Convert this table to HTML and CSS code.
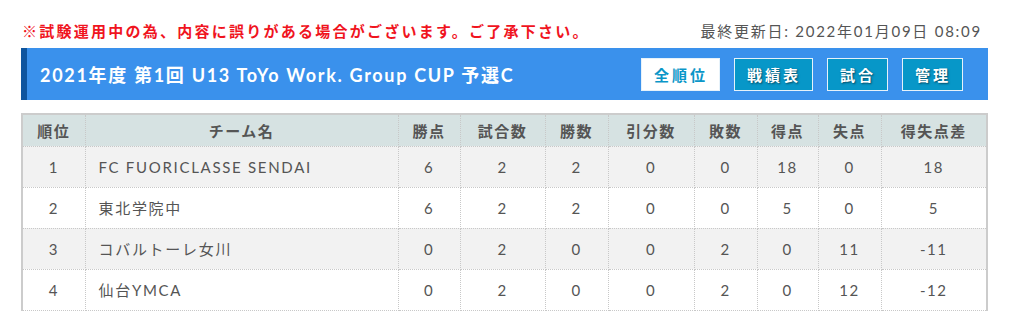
FILE: index.html
```html
<!DOCTYPE html>
<html lang="ja">
<head>
<meta charset="utf-8">
<link rel="stylesheet" href="styles.css">
</head>
<body>
<div class="page">
  <div class="topline">
    <p class="notice">※試験運用中の為、内容に誤りがある場合がございます。ご了承下さい。</p>
    <p class="updated">最終更新日: 2022年01月09日 08:09</p>
  </div>
  <div class="bar">
    <h1 class="title">2021年度 第1回 U13 ToYo Work. Group CUP 予選C</h1>
    <nav class="btns">
      <a class="btn btn-active">全順位</a>
      <a class="btn">戦績表</a>
      <a class="btn">試合</a>
      <a class="btn">管理</a>
    </nav>
  </div>
  <table class="standings">
    <colgroup>
      <col class="c-rank"><col class="c-team"><col class="c-pts"><col class="c-gp"><col class="c-w"><col class="c-d"><col class="c-l"><col class="c-gf"><col class="c-ga"><col class="c-gd">
    </colgroup>
    <thead>
      <tr><th>順位</th><th>チーム名</th><th>勝点</th><th>試合数</th><th>勝数</th><th>引分数</th><th>敗数</th><th>得点</th><th>失点</th><th>得失点差</th></tr>
    </thead>
    <tbody>
      <tr class="odd"><td>1</td><td class="team">FC FUORICLASSE SENDAI</td><td>6</td><td>2</td><td>2</td><td>0</td><td>0</td><td>18</td><td>0</td><td>18</td></tr>
      <tr><td>2</td><td class="team">東北学院中</td><td>6</td><td>2</td><td>2</td><td>0</td><td>0</td><td>5</td><td>0</td><td>5</td></tr>
      <tr class="odd"><td>3</td><td class="team">コバルトーレ女川</td><td>0</td><td>2</td><td>0</td><td>0</td><td>2</td><td>0</td><td>11</td><td>-11</td></tr>
      <tr><td>4</td><td class="team">仙台YMCA</td><td>0</td><td>2</td><td>0</td><td>0</td><td>2</td><td>0</td><td>12</td><td>-12</td></tr>
    </tbody>
  </table>
</div>
</body>
</html>
```
FILE: styles.css
```css
* { box-sizing: border-box; }
html, body { margin: 0; padding: 0; background: #fff; }
body {
  font-family: Lato, "Noto Sans CJK JP", sans-serif;
  color: #555;
  letter-spacing: 0.1em;
}
.page { padding: 18px 21px 0; }
.topline {
  display: flex;
  justify-content: space-between;
  align-items: center;
  height: 24px;
  padding: 0 6px 0 1px;
}
.notice {
  margin: 0;
  color: #f0141e;
  font-weight: bold;
  font-size: 15px;
  letter-spacing: 2.25px;
}
.updated {
  margin: 0;
  color: #555;
  font-size: 15px;
  letter-spacing: 1.75px;
}
.bar {
  margin-top: 6px;
  height: 52px;
  background: #3a91ec;
  border-left: 6px solid #0f559e;
  display: flex;
  align-items: center;
  justify-content: space-between;
  padding: 0 25px 0 13px;
}
.title {
  margin: 0;
  color: #fff;
  font-size: 18px;
  font-weight: bold;
  letter-spacing: 1.7px;
}
.btns { display: flex; gap: 14px; }
.btn {
  display: flex;
  align-items: center;
  height: 33px;
  padding: 0 11px 0 12px;
  border: 1px solid #e6f2fa;
  background: #0797c8;
  color: #fff;
  font-weight: bold;
  font-size: 15px;
  letter-spacing: 3px;
  text-shadow: 1px 1px 2px rgba(0,0,0,0.5);
}
.btn-active {
  background: #fff;
  color: #0a96c8;
  text-shadow: none;
}
.standings {
  margin-top: 13px;
  width: 100%;
  border-collapse: collapse;
  table-layout: fixed;
  border-top: 2px solid #ccc;
  border-left: 2px solid #ccc;
  border-right: 2px solid #ccc;
}
.c-rank { width: 63px; }
.c-team { width: 313px; }
.c-pts { width: 62px; }
.c-gp { width: 85px; }
.c-w { width: 63px; }
.c-d { width: 86px; }
.c-l { width: 63px; }
.c-gf { width: 61px; }
.c-ga { width: 63px; }
.c-gd { width: auto; }
.standings th, .standings td {
  border: 1px dotted #c8c8c8;
  text-align: center;
  padding: 0;
}
.standings th {
  height: 32px;
  background: #d6e2e2;
  color: #555;
  font-size: 15px;
  font-weight: bold;
  letter-spacing: 1.5px;
}
.standings td {
  height: 41px;
  font-size: 15px;
  color: #555;
  letter-spacing: 1.5px;
}
.standings tr.odd td { background: #f2f2f2; }
.standings td.team {
  text-align: left;
  padding-left: 13px;
  letter-spacing: 1.7px;
}
```
